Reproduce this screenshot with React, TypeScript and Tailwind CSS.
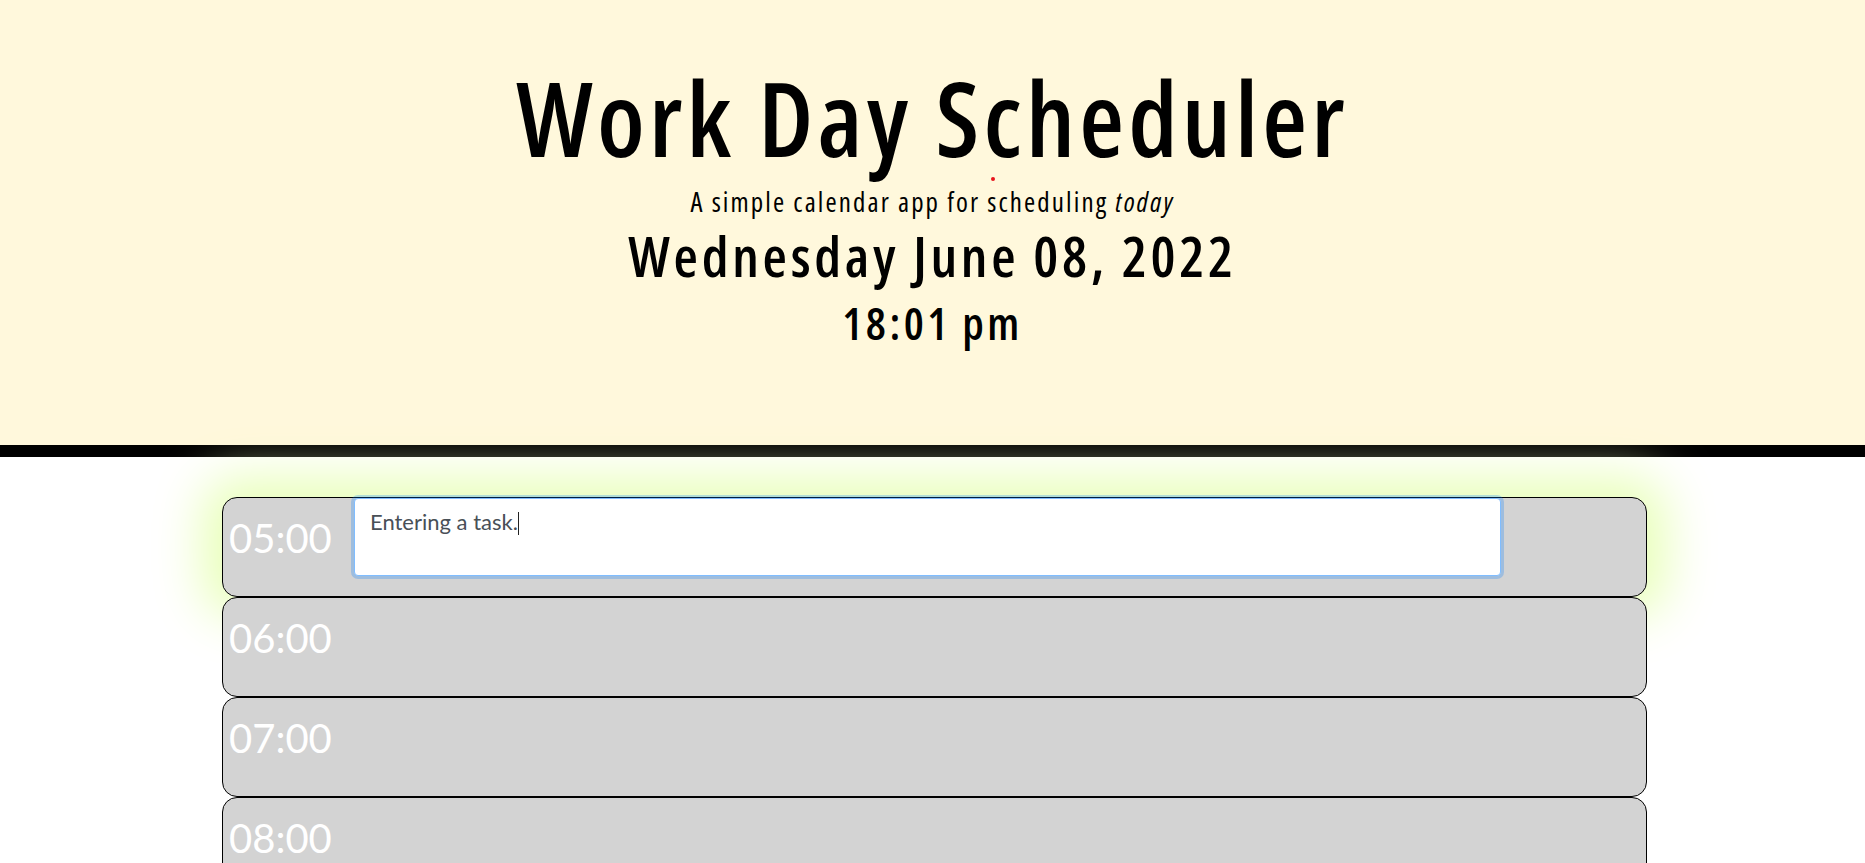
export default function App() {
  const hours = [
    "05:00",
    "06:00",
    "07:00",
    "08:00",
    "09:00",
    "10:00",
    "11:00",
    "12:00",
  ];
  return (
    <div className="min-h-screen bg-white">
      <header className="relative flex h-[457px] flex-col items-center border-b-[12px] border-black bg-[#fff8dc] pt-[66px] text-black font-['Open_Sans',sans-serif] font-semibold [font-stretch:75%]">
        <h1 className="text-[103px] leading-none tracking-[4.2px]">Work Day Scheduler</h1>
        <span className="absolute left-[991px] top-[177px] h-[4px] w-[4px] rounded-full bg-[#e8141c]" />
        <p className="mt-[19px] text-[27px] leading-none font-normal tracking-[2.1px]">
          A simple calendar app for scheduling <em>today</em>
        </p>
        <p className="mt-[12px] text-[56px] leading-none tracking-[3.7px]">Wednesday June 08, 2022</p>
        <p className="mt-[17px] text-[45px] leading-none tracking-[3.4px]">18:01 pm</p>
      </header>
      <main className="relative ml-[222px] mt-[40px] w-[1425px]">
        {hours.map((h, i) => (
          <div
            key={h}
            className={
              i === 0
                ? "flex h-[100px] rounded-[15px] border border-black bg-[#d3d3d3] shadow-[0_0_50px_19px_#e8ffb8]"
                : "flex h-[100px] rounded-[15px] border border-black bg-[#d3d3d3]"
            }
          >
            <div className="w-[131px] shrink-0 pl-[6px] pt-[20px] text-[40px] leading-none text-white font-['Lato',sans-serif]">
              {h}
            </div>
            {i === 0 && (
              <div className="h-[78px] w-[1147px] rounded-[4px] border border-[#80bdff] bg-white px-[15px] py-[6px] text-[22px] leading-[1.5] text-[#495057] shadow-[0_0_0_3px_rgba(0,123,255,0.25)] font-['Lato',sans-serif]">
                Entering a task.
                <span className="inline-block h-[23px] w-px bg-[#222] align-[-5px]" />
              </div>
            )}
          </div>
        ))}
      </main>
    </div>
  );
}
